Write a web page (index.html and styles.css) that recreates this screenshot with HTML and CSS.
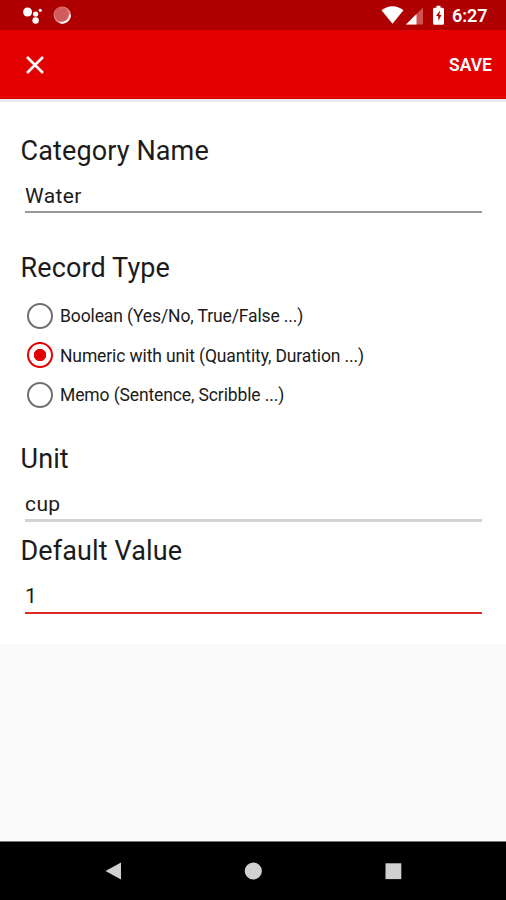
FILE: index.html
```html
<!DOCTYPE html>
<html lang="en">
<head>
<meta charset="utf-8">
<title>Category</title>
<link rel="stylesheet" href="styles.css">
</head>
<body>
<div class="screen">
  <header class="status">
    <svg class="status-left" width="56" height="30" viewBox="0 0 56 30">
      <g fill="#fff"><circle cx="7.600" cy="12" r="4.500"/><circle cx="15.600" cy="14" r="2.600"/><circle cx="20.200" cy="10.300" r="1.600"/><circle cx="15.600" cy="20.500" r="3.200"/></g>
      <circle cx="42.200" cy="15" r="8.600" fill="#e79a9b"/><circle cx="41.600" cy="14.300" r="7.400" fill="#d25b5e"/><path d="M50 14.500A8 8 0 0 1 40 22.500" fill="none" stroke="#fff" stroke-width="1.700"/>
    </svg>
    <svg class="status-right" width="64" height="30" viewBox="0 0 64 30">
      <path d="M.5 10.200Q11.500 2.300 22.500 10.200L11.500 23.800Z" fill="#fff"/>
      <path d="M42 7.500V24.500H25Z" fill="#d25050"/><path d="M35.500 14V24.500H25Z" fill="#fff"/>
      <path d="M55.500 5.800h4v2h2q1.500 0 1.500 1.500v14q0 1.500-1.500 1.500h-8q-1.500 0-1.500-1.500v-14q0-1.500 1.500-1.500h2Z" fill="#fff"/><path d="M59 10.500L55 16h2.300v5l3.200-6h-2.100Z" fill="#a90000"/>
    </svg>
    <span class="clock">6:27</span>
  </header>
  <div class="toolbar">
    <svg class="close" width="18" height="18" viewBox="0 0 18 18"><path d="M1 1l16 16M17 1L1 17" stroke="#fff" stroke-width="2.500"/></svg>
    <span class="save">SAVE</span>
  </div>
  <main class="form">
    <h2 class="title">Category Name</h2>
    <div class="field name">Water</div>
    <h2 class="title record">Record Type</h2>
    <div class="options">
      <div class="option"><i class="radio"></i><span>Boolean (Yes/No, True/False ...)</span></div>
      <div class="option"><i class="radio on"></i><span>Numeric with unit (Quantity, Duration ...)</span></div>
      <div class="option"><i class="radio"></i><span>Memo (Sentence, Scribble ...)</span></div>
    </div>
    <h2 class="title unit-title">Unit</h2>
    <div class="field unit">cup</div>
    <h2 class="title value-title">Default Value</h2>
    <div class="field value">1</div>
  </main>
  <nav class="nav">
    <svg width="506" height="58" viewBox="0 0 506 58"><g fill="#d0d0d0"><path d="M105.500 29L121 20.500V37.500Z"/><circle cx="253.300" cy="29" r="8.600"/><rect x="385.500" y="21.300" width="15.800" height="15.800"/></g></svg>
  </nav>
</div>
</body>
</html>
```
FILE: styles.css
```css
* { box-sizing: border-box; }
body { margin: 0; font-family: Roboto, "Liberation Sans", sans-serif; color: #1b1b1b; }
.screen { width: 506px; height: 900px; display: flex; flex-direction: column; background: #fafafa; overflow: hidden; }
svg { display: block; }
.status { height: 30px; flex: none; display: flex; background: #ae0000; color: #fff; padding-left: 20px; }
.status-right { margin-left: 305px; }
.clock { margin-left: 7px; font-size: 18px; font-weight: 600; line-height: 32px; letter-spacing: -.1px; }
.toolbar { height: 69px; flex: none; display: flex; align-items: center; justify-content: space-between; padding: 0 14px 0 26px; background: #e30000; color: #fff; }
.save { font-size: 17.500px; font-weight: 600; line-height: 20px; }
.form { height: 545px; flex: none; padding: 33px 24px 0 20.500px; background: #fff; border-top: 3px solid #e7e9ec; }
.title { margin: 0; height: 32px; font-size: 27px; line-height: 32px; font-weight: 400; white-space: nowrap; letter-spacing: .12px; }
.field { margin-left: 4.500px; font-size: 21px; line-height: 24px; height: 46px; border-bottom: 2px solid #999; letter-spacing: .4px; }
.name { height: 46px; padding-top: 17px; }
.record { margin-top: 39px; }
.options { padding: 12px 0 0 6.500px; }
.option { height: 39.500px; display: flex; align-items: center; gap: 7px; font-size: 17.500px; letter-spacing: -.12px; white-space: nowrap; }
.option span { padding-top: 1px; }
.radio { width: 26px; height: 26px; flex: none; border: 2px solid #707070; border-radius: 50%; }
.radio.on { border: 2px solid #e30000; background: radial-gradient(circle, #e30000 5.900px, #fff 6.500px); }
.unit-title { margin-top: 28px; }
.unit { height: 47px; border-bottom: 3px solid #d3d3d3; padding-top: 17px; }
.value-title { margin-top: 13px; }
.value { height: 47px; border-bottom: 2px solid #df2929; padding-top: 17px; }
.nav { height: 59px; flex: none; margin-top: auto; background: #000; border-top: 1px solid #777; }
```
